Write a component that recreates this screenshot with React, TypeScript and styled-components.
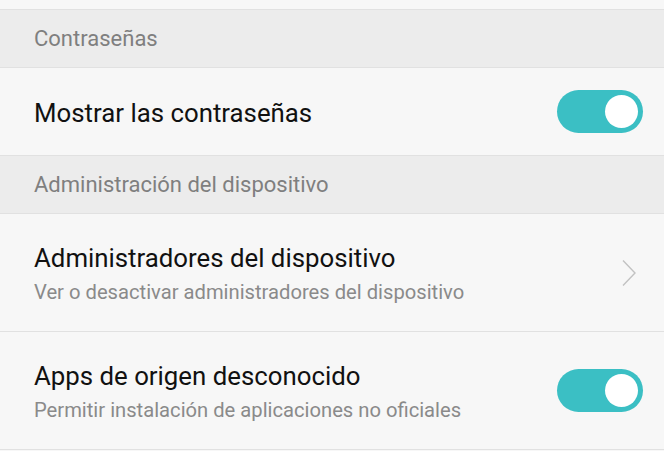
import React, { useState } from 'react'
import styled, { createGlobalStyle } from 'styled-components'

const GlobalStyle = createGlobalStyle`
  html, body {
    margin: 0;
    padding: 0;
    background: #f7f7f7;
    font-family: Roboto, "Noto Sans", Arial, sans-serif;
  }
`

const Screen = styled.div`
  width: 664px;
  height: 451px;
  overflow: hidden;
  background: #f7f7f7;
  display: flex;
  flex-direction: column;
`

const TopStrip = styled.div`
  height: 9px;
  flex: none;
  border-bottom: 1px solid #e1e1e1;
`

const SectionHeader = styled.div`
  height: 57px;
  flex: none;
  display: flex;
  align-items: center;
  padding-left: 34px;
  background: #ececec;
  border-bottom: 1px solid #e1e1e1;
  color: #7f7f7f;
  font-size: 22px;
`

const Row = styled.div<{ $tall?: boolean }>`
  height: ${p => (p.$tall ? 117 : 87)}px;
  flex: none;
  display: flex;
  align-items: center;
  padding: 0 21px 0 34px;
  border-bottom: 1px solid #e1e1e1;
  background: #f7f7f7;
`

const Texts = styled.div`
  flex: 1;
  display: flex;
  flex-direction: column;
  gap: 6px;
  padding-top: 2px;
`

const Title = styled.div`
  color: #111;
  font-size: 25.8px;
  line-height: 30px;
`

const Subtitle = styled.div`
  color: #8a8a8a;
  font-size: 20.2px;
  line-height: 26px;
`

const Track = styled.button<{ $on: boolean }>`
  width: 86px;
  height: 43px;
  border-radius: 22px;
  border: none;
  padding: 0 5px;
  display: flex;
  align-items: center;
  justify-content: ${p => (p.$on ? 'flex-end' : 'flex-start')};
  background: ${p => (p.$on ? '#3bbfc4' : '#c9c9c9')};
  cursor: pointer;
`

const Knob = styled.span`
  width: 33px;
  height: 33px;
  border-radius: 50%;
  background: #fff;
`

const Chevron = styled.svg`
  width: 16px;
  height: 28px;
  margin-right: 6px;
  flex: none;
`

const Toggle = ({ initial }: { initial: boolean }) => {
  const [on, setOn] = useState(initial)
  return (
    <Track $on={on} onClick={() => setOn(!on)}>
      <Knob />
    </Track>
  )
}

export default function App() {
  return (
    <Screen>
      <GlobalStyle />
      <TopStrip />
      <SectionHeader>Contraseñas</SectionHeader>
      <Row>
        <Texts>
          <Title>Mostrar las contraseñas</Title>
        </Texts>
        <Toggle initial />
      </Row>
      <SectionHeader>Administración del dispositivo</SectionHeader>
      <Row $tall>
        <Texts>
          <Title>Administradores del dispositivo</Title>
          <Subtitle>Ver o desactivar administradores del dispositivo</Subtitle>
        </Texts>
        <Chevron viewBox="0 0 16 28">
          <path d="M2 1.5 L14 14 L2 26.5" fill="none" stroke="#c2c2c2" strokeWidth="1.4" />
        </Chevron>
      </Row>
      <Row $tall>
        <Texts>
          <Title>Apps de origen desconocido</Title>
          <Subtitle>Permitir instalación de aplicaciones no oficiales</Subtitle>
        </Texts>
        <Toggle initial />
      </Row>
    </Screen>
  )
}
